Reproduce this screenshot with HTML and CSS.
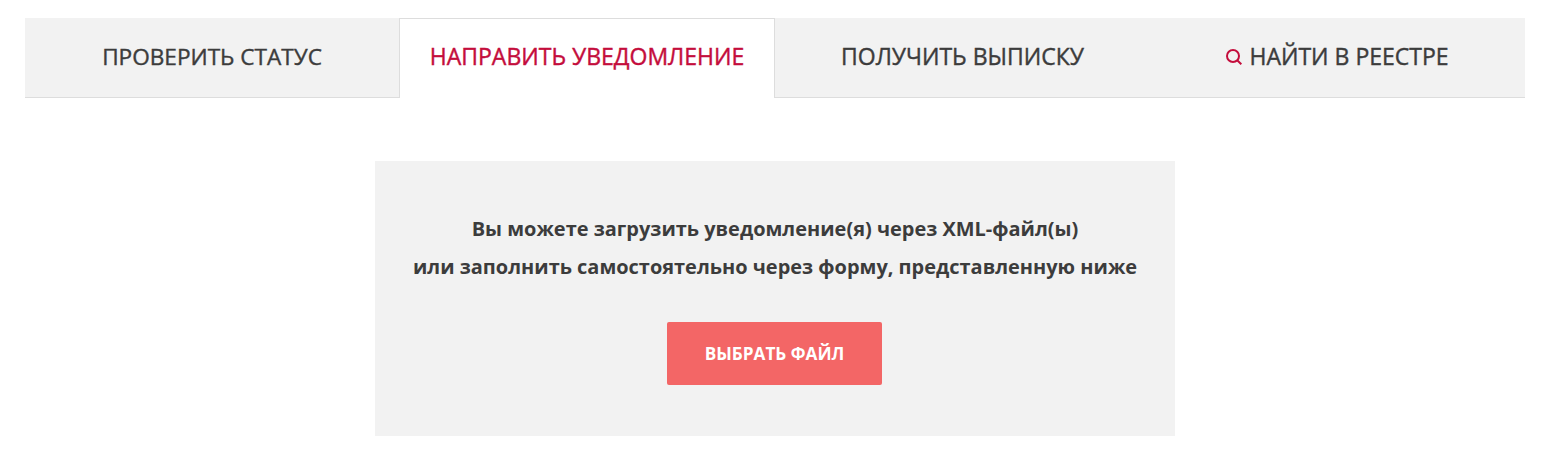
FILE: index.html
```html
<!DOCTYPE html>
<html lang="ru">
<head>
<meta charset="utf-8">
<title>Уведомление</title>
<link rel="stylesheet" href="styles.css">
</head>
<body>
<nav class="tabs">
  <a class="tab tab-first">ПРОВЕРИТЬ СТАТУС</a>
  <a class="tab tab-active">НАПРАВИТЬ УВЕДОМЛЕНИЕ</a>
  <a class="tab">ПОЛУЧИТЬ ВЫПИСКУ</a>
  <a class="tab"><svg class="icon" viewBox="0 0 16 16" width="16" height="16"><circle cx="7" cy="7" r="6" fill="none" stroke="#c40d3c" stroke-width="2"/><path d="M11.2 11.2l4.1 4.1" stroke="#c40d3c" stroke-width="2" fill="none"/></svg>НАЙТИ В РЕЕСТРЕ</a>
</nav>
<section class="panel">
  <p class="lead">Вы можете загрузить уведомление(я) через XML-файл(ы)<br>или заполнить самостоятельно через форму, представленную ниже</p>
  <button class="btn">ВЫБРАТЬ ФАЙЛ</button>
</section>
</body>
</html>
```
FILE: styles.css
```css
* { box-sizing: border-box; }
html, body { margin: 0; background: #fff; }
body { padding: 18px 19px 0 25px; font-family: "Open Sans", sans-serif; color: #3c3c3c; }
.tabs { display: grid; grid-template-columns: 374px 376px 375px 375px; height: 80px; background: #f2f2f2; border-bottom: 1px solid #ddd; }
.tab { display: flex; align-items: center; justify-content: center; font-size: 23px; font-weight: 400; -webkit-text-stroke: 0.4px currentColor; line-height: 1; padding-bottom: 4px; }
.tab-first { font-size: 22.6px; padding-bottom: 2px; }
.tab-active { background: #fff; color: #c40d3c; border: 1px solid #ddd; border-bottom: 0; height: 80px; }
.icon { margin-right: 7px; margin-top: 2px; }
.panel { width: 800px; height: 275px; margin: 63px auto 0; background: #f2f2f2; text-align: center; padding-top: 49px; }
.lead { margin: 0; font-size: 19.97px; font-weight: 700; line-height: 38px; }
.btn { display: block; width: 215px; height: 63px; margin: 36px 0 0 292px; background: #f36666; color: #fff; border: 0; border-radius: 2px; font: 700 17.2px "Open Sans", sans-serif; }
```
